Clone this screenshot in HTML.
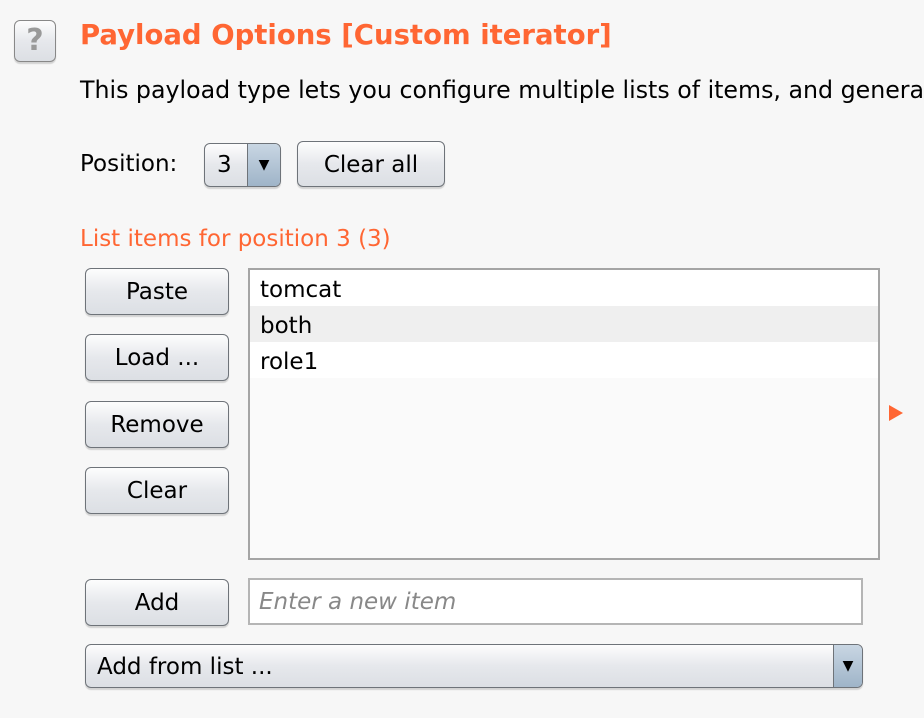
<!DOCTYPE html>
<html><head><meta charset="utf-8"><style>
body{margin:0;width:924px;height:718px;background:#f7f7f7;font-family:"DejaVu Sans","Liberation Sans",sans-serif;font-size:24px;color:#000;position:relative;overflow:hidden}
.a{position:absolute;white-space:nowrap}
.btn{position:absolute;box-sizing:border-box;border:1px solid #6e7379;border-radius:6px;background:linear-gradient(#fdfdfd,#e6e8ec 50%,#dcdfe4 100%);box-shadow:0 2px 1px rgba(0,0,0,0.15);text-align:center;font-size:23px}
.or{color:#ff6633}
</style></head><body>
<div class="btn" style="left:14px;top:20px;width:42px;height:42px;border-color:#888;color:#999;font-size:30px;line-height:40px;font-weight:bold">?</div>
<div class="a or" style="left:80px;top:19px;font-size:27.5px;font-weight:bold">Payload Options [Custom iterator]</div>
<div class="a" style="left:80px;top:76px;font-size:23.7px">This payload type lets you configure multiple lists of items, and generate</div>
<div class="a" style="left:80px;top:151px;font-size:23px">Position:</div>
<div class="btn" style="left:204px;top:143px;width:77px;height:44px;text-align:left;padding-left:12px;line-height:42px;overflow:hidden">3<div style="position:absolute;right:0;top:0;width:32px;height:42px;border-left:1px solid #6e7379;background:linear-gradient(#c9d6e3,#9fb4c8);text-align:center;font-size:14px;line-height:42px">▼</div></div>
<div class="btn" style="left:297px;top:141px;width:148px;height:46px;line-height:46px">Clear all</div>
<div class="a or" style="left:80px;top:226px;font-size:23px">List items for position 3 (3)</div>
<div class="btn" style="left:85px;top:268px;width:144px;height:47px;line-height:47px">Paste</div>
<div class="btn" style="left:85px;top:334px;width:144px;height:47px;line-height:47px">Load ...</div>
<div class="btn" style="left:85px;top:401px;width:144px;height:47px;line-height:47px">Remove</div>
<div class="btn" style="left:85px;top:467px;width:144px;height:47px;line-height:47px">Clear</div>
<div class="a" style="left:248px;top:268px;width:632px;height:292px;box-sizing:border-box;border:2px solid #a5a5a5;background:#fafafa;font-size:23px">
<div style="background:#fff;height:36px;line-height:40px;padding-left:10px">tomcat</div>
<div style="background:#efefef;height:36px;line-height:40px;padding-left:10px">both</div>
<div style="background:#fff;height:36px;line-height:40px;padding-left:10px">role1</div>
</div>
<svg class="a" style="left:888px;top:404px" width="16" height="18"><polygon points="1,1 15,9 1,17" fill="#ff6633"/></svg>
<div class="btn" style="left:85px;top:579px;width:144px;height:47px;line-height:47px">Add</div>
<div class="a" style="left:248px;top:578px;width:615px;height:47px;box-sizing:border-box;border:2px solid #b5b5b5;background:#fff;padding-left:9px;line-height:45px;color:#888;font-style:italic;font-size:23px">Enter a new item</div>
<div class="btn" style="left:85px;top:644px;width:778px;height:44px;text-align:left;padding-left:11px;line-height:44px;overflow:hidden">Add from list ...<div style="position:absolute;right:0;top:0;width:28px;height:42px;border-left:1px solid #6e7379;background:linear-gradient(#c9d6e3,#9fb4c8);text-align:center;font-size:14px;line-height:42px">▼</div></div>
</body></html>
